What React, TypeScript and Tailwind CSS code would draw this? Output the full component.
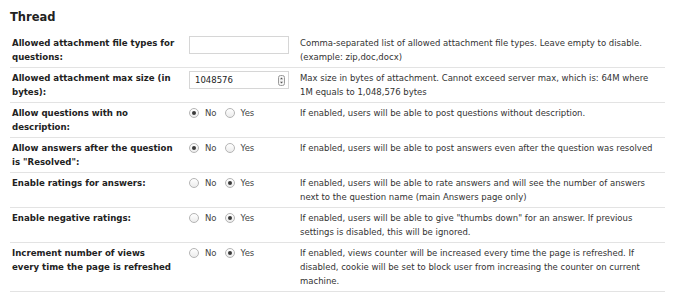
const rows = [
  {
    label: ['Allowed attachment file types for questions:'],
    control: { kind: 'text', value: '' },
    desc: 'Comma-separated list of allowed attachment file types. Leave empty to disable. (example: zip,doc,docx)',
  },
  {
    label: ['Allowed attachment max size (in bytes):'],
    control: { kind: 'number', value: '1048576' },
    desc: 'Max size in bytes of attachment. Cannot exceed server max, which is: 64M where 1M equals to 1,048,576 bytes',
  },
  {
    label: ['Allow questions with no description:'],
    control: { kind: 'radio', yes: false },
    desc: 'If enabled, users will be able to post questions without description.',
  },
  {
    label: ['Allow answers after the question is "Resolved":'],
    control: { kind: 'radio', yes: false },
    desc: 'If enabled, users will be able to post answers even after the question was resolved',
  },
  {
    label: ['Enable ratings for answers:'],
    control: { kind: 'radio', yes: true },
    desc: 'If enabled, users will be able to rate answers and will see the number of answers next to the question name (main Answers page only)',
  },
  {
    label: ['Enable negative ratings:'],
    control: { kind: 'radio', yes: true },
    desc: 'If enabled, users will be able to give "thumbs down" for an answer. If previous settings is disabled, this will be ignored.',
  },
  {
    label: ['Increment number of views', 'every time the page is refreshed'],
    control: { kind: 'radio', yes: true },
    desc: 'If enabled, views counter will be increased every time the page is refreshed. If disabled, cookie will be set to block user from increasing the counter on current machine.',
  },
];

function Radio({ checked }: { checked: boolean }) {
  return (
    <span className="flex h-[10px] w-[10px] items-center justify-center rounded-full border border-[#b4b4b4] bg-gradient-to-b from-white to-[#ececec]">
      {checked && <span className="h-[4px] w-[4px] rounded-full bg-[#3a3a3a]" />}
    </span>
  );
}

function Control({ c }: { c: (typeof rows)[number]['control'] }) {
  if (c.kind === 'text') {
    return <div className="h-[18px] w-[100px] border border-[#d6d6d6] bg-white" />;
  }
  if (c.kind === 'number') {
    return (
      <div className="flex h-[18px] w-[100px] items-center justify-between border border-[#d6d6d6] bg-white pl-[5px] pr-[3px] text-[#222]">
        <span>{c.value}</span>
        <svg width="7" height="11" viewBox="0 0 7 11">
          <rect x="0.5" y="0.5" width="6" height="10" rx="2" fill="#f4f4f4" stroke="#9a9a9a" />
          <path d="M2 4.2 L3.5 2.6 L5 4.2Z M2 6.8 L3.5 8.4 L5 6.8Z" fill="#555" />
        </svg>
      </div>
    );
  }
  return (
    <div className="flex items-center text-[#444]">
      <Radio checked={!c.yes} />
      <span className="ml-[6px]">No</span>
      <span className="ml-[8px]"><Radio checked={!!c.yes} /></span>
      <span className="ml-[6px]">Yes</span>
    </div>
  );
}

export default function App() {
  return (
    <div className="min-h-[292px] w-[675px] bg-white pl-[10px] pr-[10px] font-['DejaVu_Sans',Verdana,sans-serif] text-[8.5px] leading-[14px] text-[#333]">
      <h2 className="pt-[9px] text-[11.5px] font-bold leading-[16px] text-[#222]">Thread</h2>
      <div className="mt-[8px]">
        {rows.map((r) => (
          <div
            key={r.desc}
            className="grid grid-cols-[179px_111px_1fr] border-b border-[#e3e3e3] py-[3px]"
          >
            <div className="pl-[2px] pr-[11px] text-[8.6px] font-bold text-[#222]">
              {r.label.map((line, i) => (
                <span key={line}>
                  {i > 0 && <br />}
                  {line}
                </span>
              ))}
            </div>
            <div>
              <Control c={r.control} />
            </div>
            <div className="pr-[8px]">{r.desc}</div>
          </div>
        ))}
      </div>
    </div>
  );
}
